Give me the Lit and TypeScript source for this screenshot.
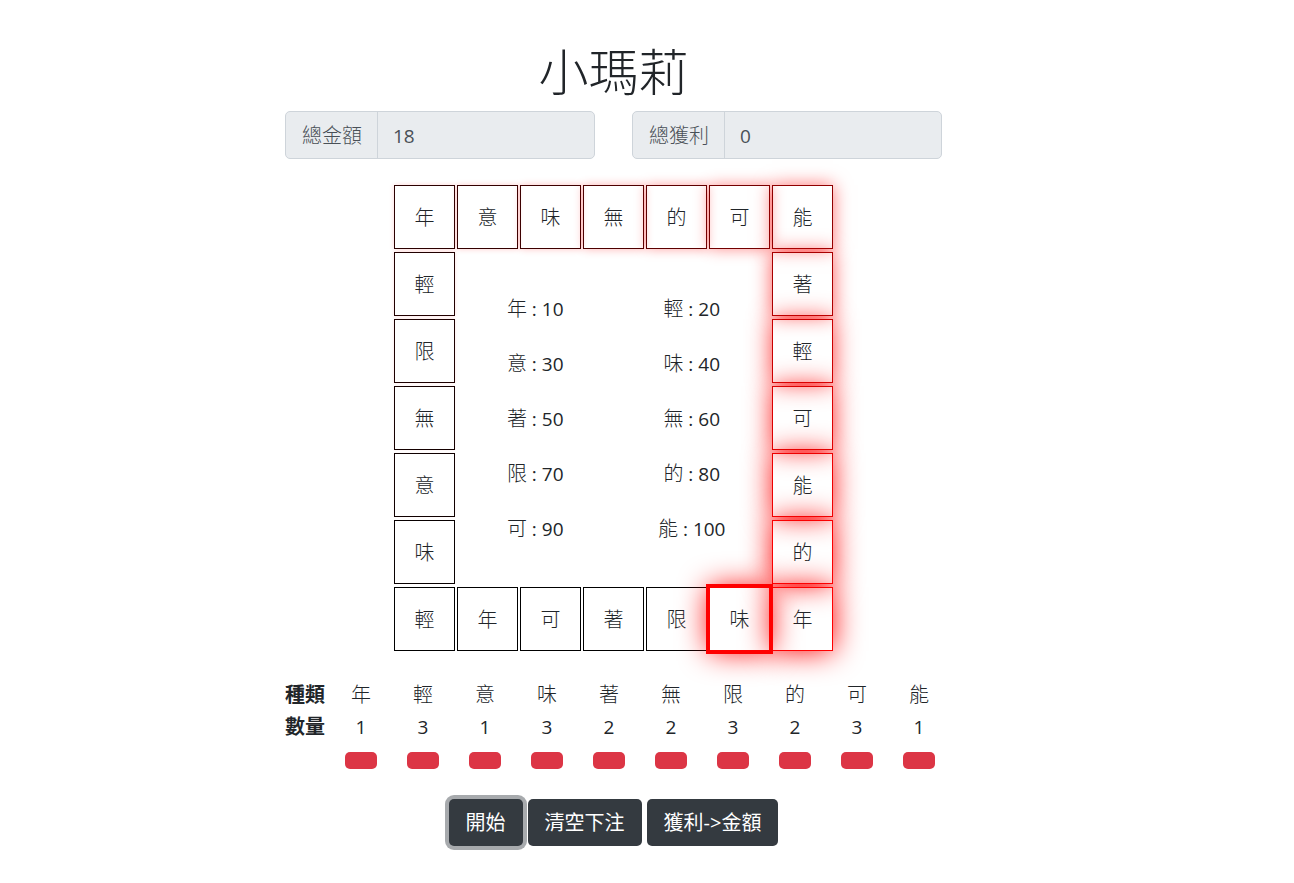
import { LitElement, html, css } from "lit";
import { customElement, state } from "lit/decorators.js";
import { classMap } from "lit/directives/class-map.js";
import { styleMap } from "lit/directives/style-map.js";

interface Tile {
  symbol: string;
  col: number;
  row: number;
  /** Remaining strength of the light trail, 0 (off) to 1 (full). */
  glow: number;
  active?: boolean;
}

const TOP = "年意味無的可能";
const RIGHT = "著輕可能的";
const BOTTOM = "輕年可著限味年";
const LEFT = "輕限無意味";

const TOP_GLOW = [0.17, 0.2, 0.24, 0.3, 0.36, 0.45, 0.56];
const RIGHT_GLOW = [0.66, 0.79, 0.86, 0.93, 0.98];
const BOTTOM_GLOW = [0, 0, 0, 0, 0, 1, 1];
const LEFT_GLOW = [0.13, 0.11, 0.08, 0.06, 0.03];

const TILES: Tile[] = [
  ...[...TOP].map((symbol, i) => ({ symbol, col: i + 1, row: 1, glow: TOP_GLOW[i] })),
  ...[...RIGHT].map((symbol, i) => ({ symbol, col: 7, row: i + 2, glow: RIGHT_GLOW[i] })),
  ...[...LEFT].map((symbol, i) => ({ symbol, col: 1, row: i + 2, glow: LEFT_GLOW[i] })),
  ...[...BOTTOM].map((symbol, i) => ({
    symbol,
    col: i + 1,
    row: 7,
    glow: BOTTOM_GLOW[i],
    active: i === 5,
  })),
];

const PAYOUTS: [string, number][] = [
  ["年", 10], ["輕", 20], ["意", 30], ["味", 40], ["著", 50],
  ["無", 60], ["限", 70], ["的", 80], ["可", 90], ["能", 100],
];

@customElement("app-root")
export class AppRoot extends LitElement {
  static styles = css`
    :host {
      display: block;
      box-sizing: border-box;
      padding: 42px 67px 32px 0;
      background: #fff;
      color: #212529;
      font: 300 20px/30px "Open Sans", "Noto Sans CJK TC", sans-serif;
    }
    * {
      box-sizing: border-box;
    }
    .page {
      display: flex;
      flex-direction: column;
      align-items: center;
      max-width: 657px;
      margin: 0 auto;
    }
    h1 {
      margin: 0 0 9px;
      font-size: 50px;
      line-height: 60px;
      font-weight: 300;
    }
    .totals {
      display: grid;
      grid-template-columns: 1fr 1fr;
      gap: 37px;
      width: 100%;
      margin-bottom: 26px;
    }
    .group {
      display: flex;
      height: 48px;
      border: 1px solid #ced4da;
      border-radius: 5px;
      background: #e9ecef;
      color: #495057;
      overflow: hidden;
    }
    .group label {
      display: flex;
      align-items: center;
      padding: 2px 15px 0 16px;
      border-right: 1px solid #ced4da;
      white-space: nowrap;
    }
    .group input {
      flex: 1;
      min-width: 0;
      padding: 2px 15px 0;
      border: 0;
      background: transparent;
      color: inherit;
      font: inherit;
      font-size: 19px;
      font-weight: 400;
      outline: none;
    }
    .board {
      display: grid;
      grid-template-columns: repeat(7, 61px);
      grid-auto-rows: 64px;
      gap: 3px 2px;
      margin-bottom: 28px;
    }
    .tile {
      display: flex;
      align-items: center;
      justify-content: center;
      padding-top: 2px;
      border: 1px solid #000;
    }
    .tile.active {
      outline: 3px solid #f00;
      z-index: 1;
    }
    .payouts {
      grid-area: 2 / 2 / 7 / 7;
      display: grid;
      grid-template-columns: 1fr 1fr;
      grid-auto-rows: 55px;
      align-content: center;
      align-items: center;
      text-align: center;
      margin: 0;
      padding: 2px 0 0;
      list-style: none;
      font-size: 19px;
      font-weight: 400;
    }
    .payouts .symbol {
      font-size: 20px;
      font-weight: 300;
    }
    table {
      align-self: flex-start;
      table-layout: fixed;
      width: 665px;
      border-collapse: collapse;
      margin-bottom: 21px;
    }
    th,
    td {
      padding: 0;
      height: 32px;
      text-align: center;
      font-weight: 300;
    }
    tbody td {
      font-size: 19px;
      font-weight: 400;
    }
    .head {
      width: 45px;
      text-align: left;
      font-weight: 700;
      white-space: nowrap;
    }
    tfoot td {
      height: 35px;
      line-height: 0;
    }
    .bet {
      width: 32px;
      height: 17px;
      padding: 0;
      border: 0;
      border-radius: 5px;
      background: #dc3545;
    }
    .actions {
      display: flex;
      gap: 5px;
    }
    .action {
      height: 47px;
      padding: 0 17px;
      border: 0;
      border-radius: 5px;
      background: #343a40;
      color: #fff;
      font: inherit;
      font-weight: 400;
    }
    .action.focused {
      box-shadow: 0 0 0 4px rgba(52, 58, 64, 0.43);
    }
  `;

  @state() private total = 18;
  @state() private profit = 0;
  @state() private bets = [
    ["年", 1], ["輕", 3], ["意", 1], ["味", 3], ["著", 2],
    ["無", 2], ["限", 3], ["的", 2], ["可", 3], ["能", 1],
  ] as [string, number][];

  private addBet(index: number) {
    this.bets = this.bets.map(([s, n], i) => [s, i === index ? n + 1 : n]);
  }

  private clearBets() {
    this.total += this.bets.reduce((sum, [, n]) => sum + n, 0);
    this.bets = this.bets.map(([s]) => [s, 0]);
  }

  private collect() {
    this.total += this.profit;
    this.profit = 0;
  }

  private renderTile(tile: Tile) {
    const { symbol, col, row, glow, active } = tile;
    return html`<div
      class=${classMap({ tile: true, active: !!active })}
      style=${styleMap({
        gridArea: `${row} / ${col}`,
        borderColor: `rgb(${Math.round(255 * glow)}, 0, 0)`,
        boxShadow: glow ? `0 0 ${Math.round(30 * glow)}px rgba(255, 0, 0, ${glow})` : "none",
      })}
    >${symbol}</div>`;
  }

  render() {
    return html`
      <main class="page">
        <h1>小瑪莉</h1>
        <div class="totals">
          <div class="group">
            <label for="total">總金額</label>
            <input id="total" type="text" readonly .value=${String(this.total)} />
          </div>
          <div class="group">
            <label for="profit">總獲利</label>
            <input id="profit" type="text" readonly .value=${String(this.profit)} />
          </div>
        </div>
        <div class="board">
          <ul class="payouts">
            ${PAYOUTS.map(([s, n]) => html`<li><span class="symbol">${s}</span> : ${n}</li>`)}
          </ul>
          ${TILES.map((tile) => this.renderTile(tile))}
        </div>
        <table>
          <thead>
            <tr>
              <th class="head" scope="row">種類</th>
              ${this.bets.map(([s]) => html`<th scope="col">${s}</th>`)}
            </tr>
          </thead>
          <tbody>
            <tr>
              <th class="head" scope="row">數量</th>
              ${this.bets.map(([, n]) => html`<td>${n}</td>`)}
            </tr>
          </tbody>
          <tfoot>
            <tr>
              <td></td>
              ${this.bets.map(
                ([s], i) => html`<td>
                  <button class="bet" aria-label=${s} @click=${() => this.addBet(i)}></button>
                </td>`
              )}
            </tr>
          </tfoot>
        </table>
        <div class="actions">
          <button class="action focused">開始</button>
          <button class="action" @click=${this.clearBets}>清空下注</button>
          <button class="action" @click=${this.collect}>獲利-&gt;金額</button>
        </div>
      </main>
    `;
  }
}
